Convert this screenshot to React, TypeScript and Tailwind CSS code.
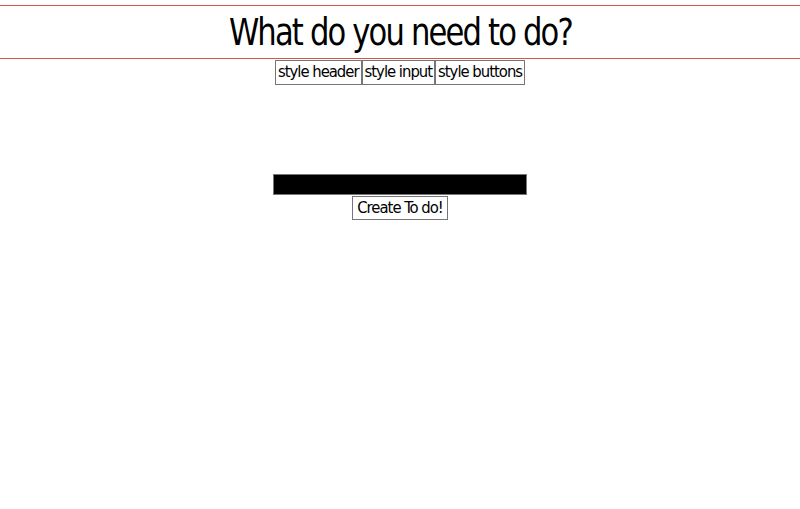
export default function App() {
  return (
    <div className="min-h-screen bg-white text-black font-['DejaVu_Sans_Condensed','Liberation_Sans_Narrow',sans-serif]">
      <header className="mt-[5px] border-y border-[#d9534f] h-[54px] flex items-center justify-center">
        <h1 className="text-[37px] font-light leading-none tracking-[-2px] scale-x-[0.92]">
          What do you need to do?
        </h1>
      </header>
      <nav className="flex justify-center mt-[1px]">
        <button className="border border-[#767676] h-[25px] px-[2px] text-[16.5px] leading-none tracking-[-1px]">
          style header
        </button>
        <button className="border border-[#767676] h-[25px] px-[2px] text-[16.5px] leading-none tracking-[-1px]">
          style input
        </button>
        <button className="border border-[#767676] h-[25px] px-[2px] text-[16.5px] leading-none tracking-[-1px]">
          style buttons
        </button>
      </nav>
      <div className="flex flex-col items-center mt-[89px]">
        <input className="w-[254px] h-[21px] bg-black border border-[#767676]" />
        <button className="border border-[#767676] h-[24px] px-[4px] text-[16.5px] leading-none tracking-[-1px] mt-[1px]">
          Create To do!
        </button>
      </div>
    </div>
  );
}
